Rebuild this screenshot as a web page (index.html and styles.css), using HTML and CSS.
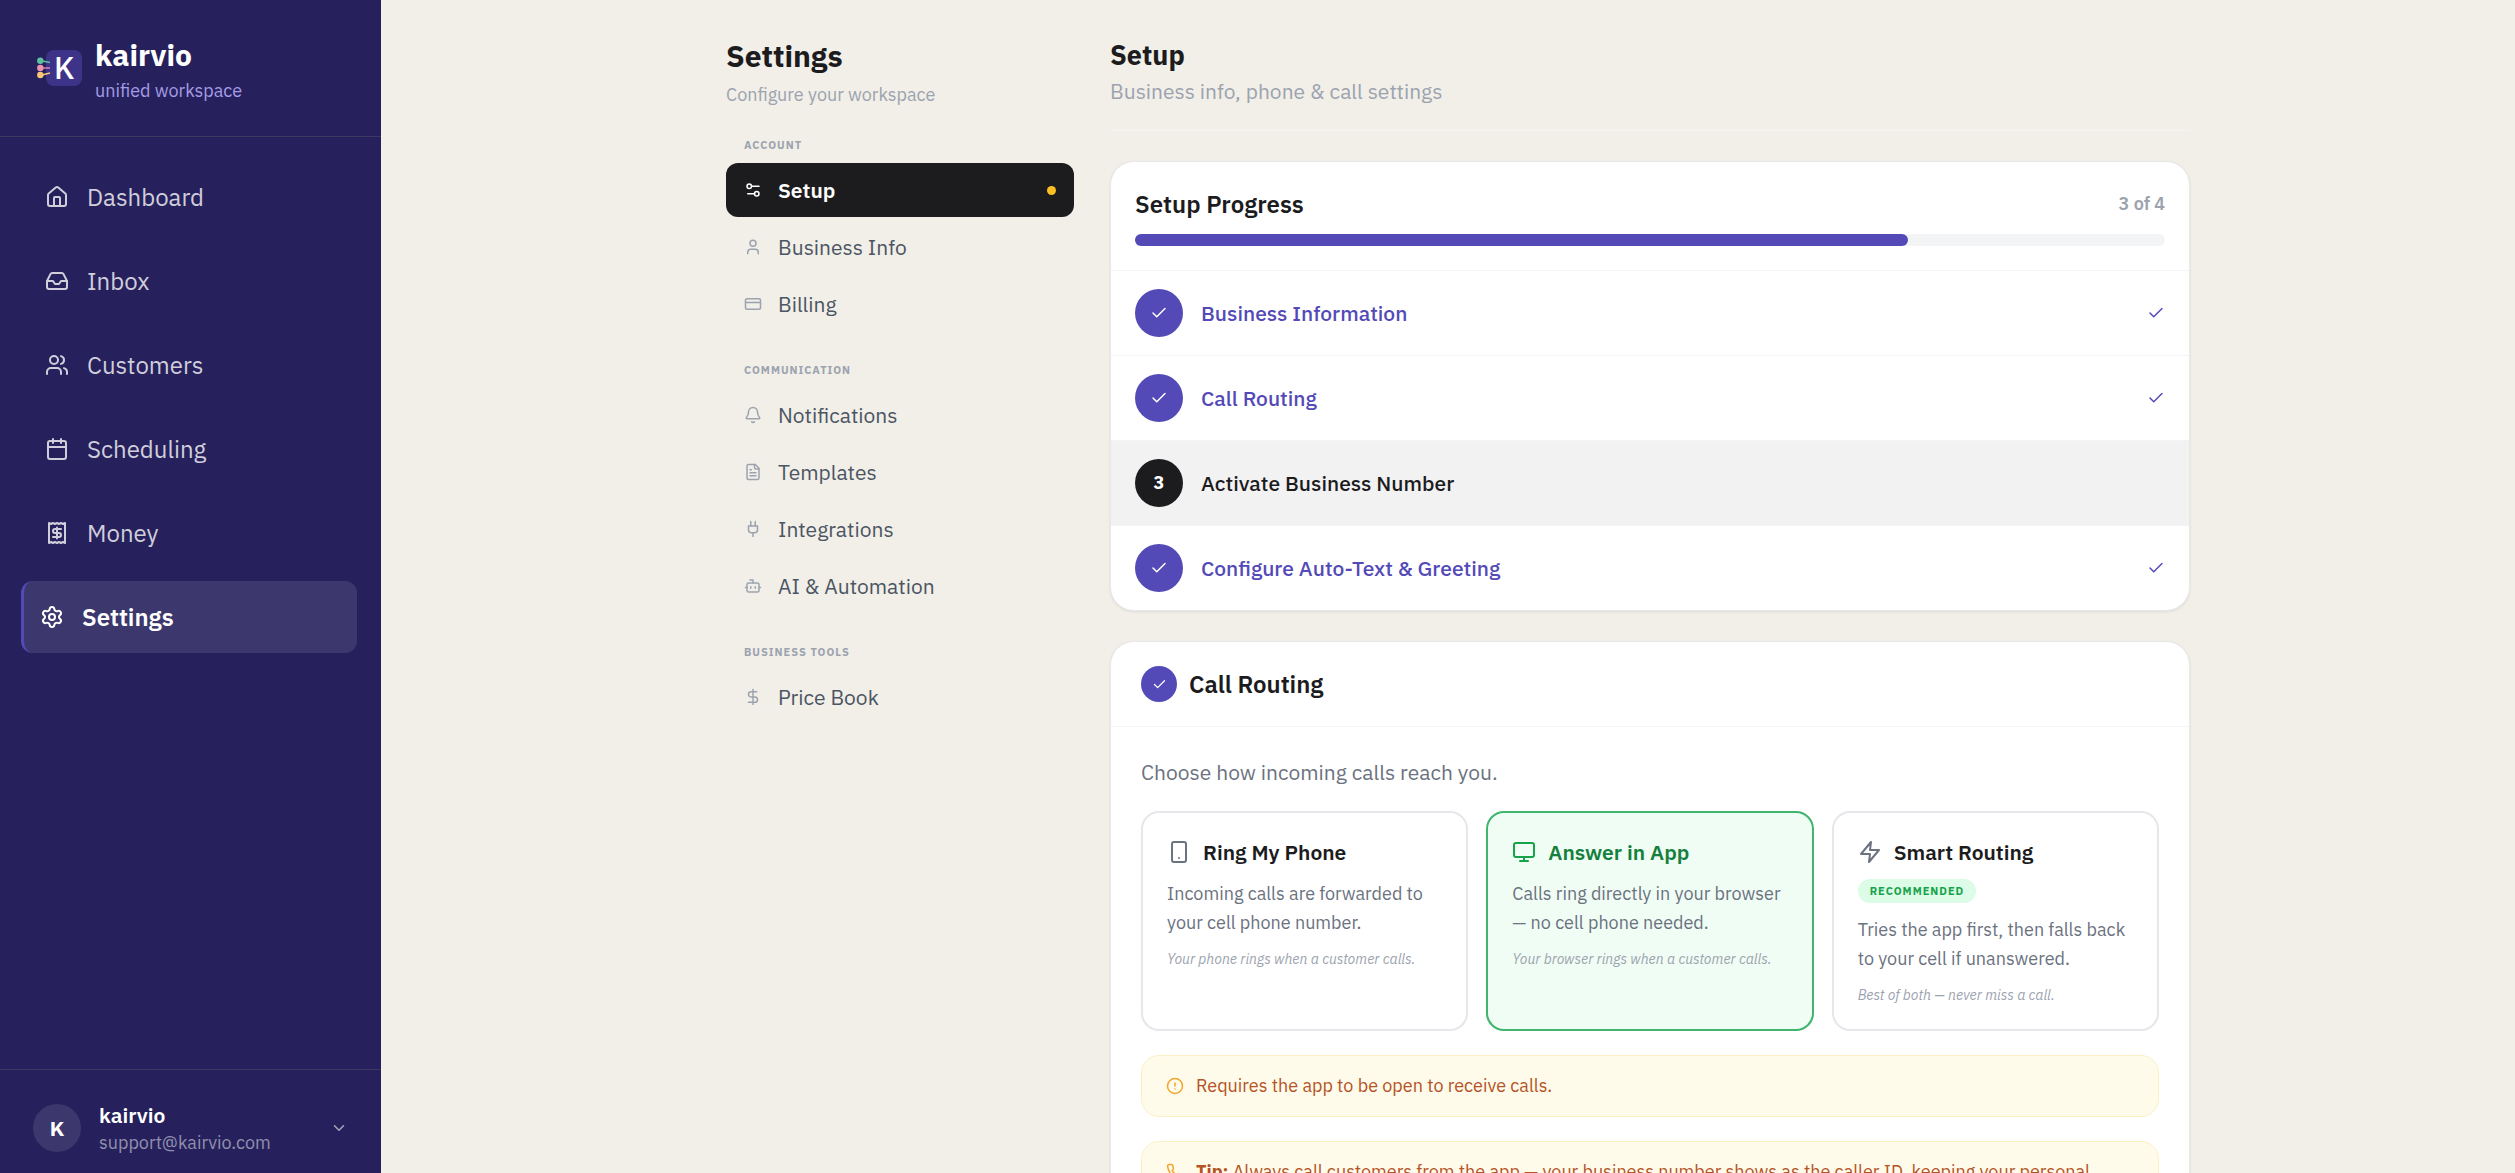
FILE: index.html
```html
<!DOCTYPE html>
<html lang="en">
<head>
<meta charset="utf-8">
<title>Kairvio – Settings</title>
<meta name="viewport" content="width=device-width, initial-scale=1">
<link rel="stylesheet" href="styles.css">
</head>
<body>
<svg class="sprite" aria-hidden="true">
  <symbol id="i-home" viewBox="0 0 24 24"><path d="M15 21v-8a1 1 0 0 0-1-1h-4a1 1 0 0 0-1 1v8"/><path d="M3 10a2 2 0 0 1 .709-1.528l7-5.999a2 2 0 0 1 2.582 0l7 5.999A2 2 0 0 1 21 10v9a2 2 0 0 1-2 2H5a2 2 0 0 1-2-2z"/></symbol>
  <symbol id="i-inbox" viewBox="0 0 24 24"><path d="M22 12h-6l-2 3h-4l-2-3H2"/><path d="M5.45 5.11 2 12v6a2 2 0 0 0 2 2h16a2 2 0 0 0 2-2v-6l-3.45-6.89A2 2 0 0 0 16.76 4H7.24a2 2 0 0 0-1.79 1.11z"/></symbol>
  <symbol id="i-users" viewBox="0 0 24 24"><path d="M16 21v-2a4 4 0 0 0-4-4H6a4 4 0 0 0-4 4v2"/><circle cx="9" cy="7" r="4"/><path d="M22 21v-2a4 4 0 0 0-3-3.87"/><path d="M16 3.13a4 4 0 0 1 0 7.75"/></symbol>
  <symbol id="i-calendar" viewBox="0 0 24 24"><path d="M8 2v4M16 2v4M3 10h18"/><rect x="3" y="4" width="18" height="18" rx="2"/></symbol>
  <symbol id="i-receipt" viewBox="0 0 24 24"><path d="M4 2v20l2-1 2 1 2-1 2 1 2-1 2 1 2-1 2 1V2l-2 1-2-1-2 1-2-1-2 1-2-1-2 1Z"/><path d="M16 8h-6a2 2 0 1 0 0 4h4a2 2 0 1 1 0 4H8"/><path d="M12 17.5v-11"/></symbol>
  <symbol id="i-settings" viewBox="0 0 24 24"><path d="M9.671 4.136a2.34 2.34 0 0 1 4.659 0 2.34 2.34 0 0 0 3.319 1.915 2.34 2.34 0 0 1 2.33 4.033 2.34 2.34 0 0 0 0 3.831 2.34 2.34 0 0 1-2.33 4.033 2.34 2.34 0 0 0-3.319 1.915 2.34 2.34 0 0 1-4.659 0 2.34 2.34 0 0 0-3.32-1.915 2.34 2.34 0 0 1-2.33-4.033 2.34 2.34 0 0 0 0-3.831A2.34 2.34 0 0 1 6.35 6.051a2.34 2.34 0 0 0 3.319-1.915"/><circle cx="12" cy="12" r="3"/></symbol>
  <symbol id="i-chevron" viewBox="0 0 24 24"><path d="m6 9 6 6 6-6"/></symbol>
  <symbol id="i-sliders" viewBox="0 0 24 24"><path d="M20 7h-9M14 17H5"/><circle cx="17" cy="17" r="3"/><circle cx="7" cy="7" r="3"/></symbol>
  <symbol id="i-user" viewBox="0 0 24 24"><path d="M19 21v-2a4 4 0 0 0-4-4H9a4 4 0 0 0-4 4v2"/><circle cx="12" cy="7" r="4"/></symbol>
  <symbol id="i-card" viewBox="0 0 24 24"><rect x="2" y="5" width="20" height="14" rx="2"/><path d="M2 10h20"/></symbol>
  <symbol id="i-bell" viewBox="0 0 24 24"><path d="M10.268 21a2 2 0 0 0 3.464 0"/><path d="M3.262 15.326A1 1 0 0 0 4 17h16a1 1 0 0 0 .74-1.673C19.41 13.956 18 12.499 18 8A6 6 0 0 0 6 8c0 4.499-1.411 5.956-2.738 7.326"/></symbol>
  <symbol id="i-file" viewBox="0 0 24 24"><path d="M15 2H6a2 2 0 0 0-2 2v16a2 2 0 0 0 2 2h12a2 2 0 0 0 2-2V7Z"/><path d="M14 2v4a2 2 0 0 0 2 2h4M10 9H8M16 13H8M16 17H8"/></symbol>
  <symbol id="i-plug" viewBox="0 0 24 24"><path d="M12 22v-5M9 8V2M15 8V2"/><path d="M18 8v5a4 4 0 0 1-4 4h-4a4 4 0 0 1-4-4V8Z"/></symbol>
  <symbol id="i-bot" viewBox="0 0 24 24"><path d="M12 8V4H8"/><rect x="4" y="8" width="16" height="12" rx="2"/><path d="M2 14h2M20 14h2M15 13v2M9 13v2"/></symbol>
  <symbol id="i-dollar" viewBox="0 0 24 24"><path d="M12 2v20"/><path d="M17 5H9.500a3.500 3.500 0 0 0 0 7h5a3.500 3.500 0 0 1 0 7H6"/></symbol>
  <symbol id="i-check" viewBox="0 0 24 24"><path d="M20 6 9 17l-5-5"/></symbol>
  <symbol id="i-phone-device" viewBox="0 0 24 24"><rect x="5" y="2" width="14" height="20" rx="2"/><path d="M12 18h.01"/></symbol>
  <symbol id="i-monitor" viewBox="0 0 24 24"><rect x="2" y="3" width="20" height="14" rx="2"/><path d="M8 21h8M12 17v4"/></symbol>
  <symbol id="i-zap" viewBox="0 0 24 24"><path d="M13 2 3 14h9l-1 8 10-12h-9z"/></symbol>
  <symbol id="i-alert" viewBox="0 0 24 24"><circle cx="12" cy="12" r="10"/><path d="M12 8v4M12 16h.01"/></symbol>
  <symbol id="i-phone" viewBox="0 0 24 24"><path d="M22 16.920v3a2 2 0 0 1-2.180 2 19.790 19.790 0 0 1-8.630-3.070 19.500 19.500 0 0 1-6-6 19.790 19.790 0 0 1-3.070-8.670A2 2 0 0 1 4.110 2h3a2 2 0 0 1 2 1.720 12.840 12.840 0 0 0 .7 2.810 2 2 0 0 1-.45 2.110L8.090 9.910a16 16 0 0 0 6 6l1.270-1.270a2 2 0 0 1 2.110-.45 12.840 12.840 0 0 0 2.810.7A2 2 0 0 1 22 16.920z"/></symbol>
</svg>

<div class="app">
  <aside class="sidebar">
    <header class="brand">
      <svg class="brand-mark" viewBox="0 0 48 36" role="img" aria-label="kairvio logo">
        <rect x="11" y="0" width="36" height="36" rx="8" fill="#3d3489"/>
        <g stroke-width="1.300" fill="none"><path d="M5 10.500 15 12.500" stroke="#5dc0a0"/><path d="M5 18h10" stroke="#ed93b1"/><path d="M5 25.500 15 23" stroke="#fac775"/></g>
        <circle cx="5.300" cy="10.700" r="3.200" fill="#5dc0a0"/><circle cx="5.300" cy="18" r="3.200" fill="#ed93b1"/><circle cx="5.300" cy="25" r="3.200" fill="#fac775"/>
        <text class="brand-letter" x="19" y="29">K</text>
      </svg>
      <div>
        <div class="brand-name">kairvio</div>
        <div class="brand-tag">unified workspace</div>
      </div>
    </header>
    <nav class="nav" aria-label="Main">
      <a href="#" class="nav-link"><svg class="icon icon-lg"><use href="#i-home"/></svg>Dashboard</a>
      <a href="#" class="nav-link"><svg class="icon icon-lg"><use href="#i-inbox"/></svg>Inbox</a>
      <a href="#" class="nav-link"><svg class="icon icon-lg"><use href="#i-users"/></svg>Customers</a>
      <a href="#" class="nav-link"><svg class="icon icon-lg"><use href="#i-calendar"/></svg>Scheduling</a>
      <a href="#" class="nav-link"><svg class="icon icon-lg"><use href="#i-receipt"/></svg>Money</a>
      <a href="#" class="nav-link is-active" aria-current="page"><svg class="icon icon-lg"><use href="#i-settings"/></svg>Settings</a>
    </nav>
    <footer class="account">
      <button class="account-button" type="button">
        <span class="avatar">K</span>
        <span class="account-text"><span class="account-name">kairvio</span><span class="account-mail">support@kairvio.com</span></span>
        <svg class="icon"><use href="#i-chevron"/></svg>
      </button>
    </footer>
  </aside>

  <main class="main">
    <div class="page">
      <aside class="menu">
        <h1 class="menu-title">Settings</h1>
        <p class="menu-sub">Configure your workspace</p>
        <nav class="menu-groups" aria-label="Settings">
          <section>
            <h2 class="menu-label">Account</h2>
            <div class="menu-list">
              <a href="#" class="menu-link is-active" aria-current="page"><svg class="icon"><use href="#i-sliders"/></svg>Setup<span class="dot"></span></a>
              <a href="#" class="menu-link"><svg class="icon"><use href="#i-user"/></svg>Business Info</a>
              <a href="#" class="menu-link"><svg class="icon"><use href="#i-card"/></svg>Billing</a>
            </div>
          </section>
          <section>
            <h2 class="menu-label">Communication</h2>
            <div class="menu-list">
              <a href="#" class="menu-link"><svg class="icon"><use href="#i-bell"/></svg>Notifications</a>
              <a href="#" class="menu-link"><svg class="icon"><use href="#i-file"/></svg>Templates</a>
              <a href="#" class="menu-link"><svg class="icon"><use href="#i-plug"/></svg>Integrations</a>
              <a href="#" class="menu-link"><svg class="icon"><use href="#i-bot"/></svg>AI &amp; Automation</a>
            </div>
          </section>
          <section>
            <h2 class="menu-label">Business Tools</h2>
            <div class="menu-list">
              <a href="#" class="menu-link"><svg class="icon"><use href="#i-dollar"/></svg>Price Book</a>
            </div>
          </section>
        </nav>
      </aside>

      <div class="content">
        <header class="content-head">
          <h2 class="content-title">Setup</h2>
          <p class="content-sub">Business info, phone &amp; call settings</p>
        </header>

        <section class="card">
          <header class="progress-head">
            <div class="progress-row">
              <h3 class="card-title">Setup Progress</h3>
              <span class="progress-count">3 of 4</span>
            </div>
            <div class="track" role="progressbar" aria-label="Setup progress" aria-valuenow="3" aria-valuemin="0" aria-valuemax="4"><div class="track-fill" style="width: 75%"></div></div>
          </header>
          <div class="steps">
            <button type="button" class="step is-done"><span class="badge"><svg class="icon"><use href="#i-check"/></svg></span><span class="step-name">Business Information</span><svg class="icon"><use href="#i-check"/></svg></button>
            <button type="button" class="step is-done"><span class="badge"><svg class="icon"><use href="#i-check"/></svg></span><span class="step-name">Call Routing</span><svg class="icon"><use href="#i-check"/></svg></button>
            <button type="button" class="step is-current"><span class="badge">3</span><span class="step-name">Activate Business Number</span></button>
            <button type="button" class="step is-done"><span class="badge"><svg class="icon"><use href="#i-check"/></svg></span><span class="step-name">Configure Auto-Text &amp; Greeting</span><svg class="icon"><use href="#i-check"/></svg></button>
          </div>
        </section>

        <section class="card">
          <header class="routing-head">
            <span class="badge badge-sm"><svg class="icon icon-sm"><use href="#i-check"/></svg></span>
            <h3 class="card-title">Call Routing</h3>
          </header>
          <div class="routing-body">
            <p class="lead">Choose how incoming calls reach you.</p>
            <div class="options">
              <button type="button" class="option">
                <span class="option-title"><svg class="icon icon-lg"><use href="#i-phone-device"/></svg>Ring My Phone</span>
                <span class="option-text">Incoming calls are forwarded to your cell phone number.</span>
                <span class="option-note">Your phone rings when a customer calls.</span>
              </button>
              <button type="button" class="option is-selected" aria-pressed="true">
                <span class="option-title"><svg class="icon icon-lg"><use href="#i-monitor"/></svg>Answer in App</span>
                <span class="option-text">Calls ring directly in your browser — no cell phone needed.</span>
                <span class="option-note">Your browser rings when a customer calls.</span>
              </button>
              <button type="button" class="option">
                <span class="option-title"><svg class="icon icon-lg"><use href="#i-zap"/></svg>Smart Routing</span>
                <span class="tag">Recommended</span>
                <span class="option-text">Tries the app first, then falls back to your cell if unanswered.</span>
                <span class="option-note">Best of both — never miss a call.</span>
              </button>
            </div>
            <p class="notice"><svg class="icon"><use href="#i-alert"/></svg><span>Requires the app to be open to receive calls.</span></p>
            <p class="notice"><svg class="icon"><use href="#i-phone"/></svg><span><strong>Tip:</strong> Always call customers from the app — your business number shows as the caller ID, keeping your personal</span></p>
          </div>
        </section>
      </div>
    </div>
  </main>
</div>
</body>
</html>
```
FILE: styles.css
```css
:root {
  --ink: #1c1c1e;
  --grey: #9ca3af;
  --violet: #534ab7;
  --navy: #26215c;
  --line: #f3f4f6;
}

* { box-sizing: border-box; margin: 0; }

body {
  font-family: "IBM Plex Sans", Roboto, "Noto Sans", sans-serif;
  font-size: 21px;
  line-height: 30px;
  color: var(--ink);
  background: #f1efe8;
}

a { color: inherit; text-decoration: none; }
button { font: inherit; color: inherit; border: 0; background: none; text-align: left; padding: 0; cursor: pointer; }

.sprite { display: none; }
.icon { width: 18px; height: 18px; flex: none; fill: none; stroke: currentColor; stroke-width: 2; stroke-linecap: round; stroke-linejoin: round; }
.icon-lg { width: 24px; height: 24px; }
.icon-sm { width: 15px; height: 15px; }

.app { display: flex; height: 100vh; }

/* Sidebar */
.sidebar { width: 381px; flex: none; display: flex; flex-direction: column; background: var(--navy); color: #fff; }
.brand { display: flex; align-items: center; gap: 12px; padding: 32px 35px 32px; border-bottom: 1px solid #3d385f; }
.brand-mark { width: 48px; height: 36px; flex: none; }
.brand-letter { font-size: 31px; font-weight: 500; fill: #fff; }
.brand-name { font-size: 30px; line-height: 45px; font-weight: 700; }
.brand-tag { font-size: 18px; line-height: 27px; color: #a49ce6; }
.nav { flex: 1; display: flex; flex-direction: column; gap: 12px; padding: 24px; }
.nav-link { display: flex; align-items: center; gap: 18px; height: 72px; padding-left: 21px; border-radius: 12px; font-size: 24px; color: #d0cedb; }
.nav-link.is-active { margin-left: -3px; padding-left: 16px; border-left: 3px solid var(--violet); background: #3c376c; color: #fff; font-weight: 600; }
.account { border-top: 1px solid #3d385f; padding: 30px 33px 17px; }
.account-button { display: flex; align-items: center; gap: 18px; width: 100%; }
.avatar { display: grid; place-items: center; width: 48px; height: 48px; border-radius: 50%; background: #3c376c; font-weight: 700; }
.account-text { display: flex; flex-direction: column; flex: 1; }
.account-name { font-weight: 600; line-height: 30px; }
.account-mail { font-size: 18px; line-height: 26px; color: #928fae; }
.account .icon { color: #a8a6be; }

/* Page */
.main { flex: 1; min-width: 0; overflow-y: auto; scrollbar-width: none; padding: 33px 24px 60px 44px; }
.page { display: grid; grid-template-columns: 348px minmax(0, 1fr); gap: 36px; max-width: 1464px; margin: 0 auto; }

/* Settings menu */
.menu-title { font-size: 30px; line-height: 45px; font-weight: 700; }
.menu-sub { font-size: 18px; line-height: 27px; padding-top: 3px; color: var(--grey); }
.menu-groups { display: flex; flex-direction: column; gap: 30px; padding-top: 28px; }
.menu-label { padding: 0 18px 9px; font-size: 11px; line-height: 18px; font-weight: 700; letter-spacing: 1px; text-transform: uppercase; color: var(--grey); }
.menu-list { display: flex; flex-direction: column; gap: 3px; }
.menu-link { display: flex; align-items: center; gap: 16px; height: 54px; padding: 0 18px; border-radius: 12px; color: #4b5563; }
.menu-link .icon { color: var(--grey); }
.menu-link.is-active { background: var(--ink); color: #fff; font-weight: 600; }
.menu-link.is-active .icon { color: #fff; }
.dot { width: 9px; height: 9px; margin-left: auto; border-radius: 50%; background: #fbbf24; }

/* Content */
.content { display: flex; flex-direction: column; gap: 30px; }
.content-head { height: 98px; padding-top: 2px; border-bottom: 1px solid var(--line); }
.content-title { font-size: 27px; line-height: 40px; font-weight: 700; }
.content-sub { line-height: 32px; color: var(--grey); }

.card { border: 1px solid #e7e8ea; border-radius: 24px; background: #fff; box-shadow: 0 1px 3px #00000014; overflow: hidden; }
.card-title { font-size: 24px; line-height: 36px; font-weight: 600; }

.progress-head { padding: 24px; border-bottom: 1px solid var(--line); }
.progress-row { display: flex; align-items: center; justify-content: space-between; padding-bottom: 12px; }
.progress-count { font-size: 18px; font-weight: 600; color: var(--grey); }
.track { height: 12px; border-radius: 6px; background: var(--line); }
.track-fill { height: 100%; border-radius: 6px; background: var(--violet); }

.step { display: flex; align-items: center; gap: 18px; width: 100%; padding: 18px 24px; border-bottom: 1px solid var(--line); font-weight: 500; }
.step:last-child { border-bottom: 0; }
.step-name { flex: 1; }
.step.is-done { color: var(--violet); }
.step.is-current { background: #f2f2f3; }
.badge { display: grid; place-items: center; width: 48px; height: 48px; border-radius: 50%; background: var(--violet); color: #fff; font-size: 18px; font-weight: 700; }
.badge-sm { width: 36px; height: 36px; }
.step.is-current .badge { background: var(--ink); }

.routing-head { display: flex; align-items: center; gap: 12px; padding: 24px 30px; border-bottom: 1px solid var(--line); }
.routing-body { display: flex; flex-direction: column; gap: 24px; padding: 30px; }
.lead { color: #6b7280; line-height: 30px; }
.options { display: grid; grid-template-columns: repeat(3, minmax(0, 1fr)); gap: 18px; }
.option { display: flex; flex-direction: column; align-items: flex-start; gap: 12px; padding: 24px; border: 2px solid #e5e7eb; border-radius: 18px; }
.option-title { display: flex; align-items: center; gap: 12px; font-weight: 600; }
.option-title .icon { color: #6b7280; }
.option-text { font-size: 18px; line-height: 29px; color: #6b7280; }
.option-note { font-size: 14px; line-height: 20px; font-style: italic; color: var(--grey); }
.option.is-selected { border-color: #3fb56d; background: #f0fdf4; }
.option.is-selected .option-title { color: #15803d; }
.option.is-selected .icon { color: #16a34a; }
.tag { padding: 0 12px; border-radius: 12px; background: #dcfce7; color: #16a34a; font-size: 11px; line-height: 24px; font-weight: 700; letter-spacing: 1px; text-transform: uppercase; }
.notice { display: flex; align-items: center; gap: 12px; padding: 16px 24px; border: 1px solid #fbf0c4; border-radius: 18px; background: #fffbeb; font-size: 18px; line-height: 28px; color: #b45325; }
.notice .icon { color: #f0a52e; }
```
